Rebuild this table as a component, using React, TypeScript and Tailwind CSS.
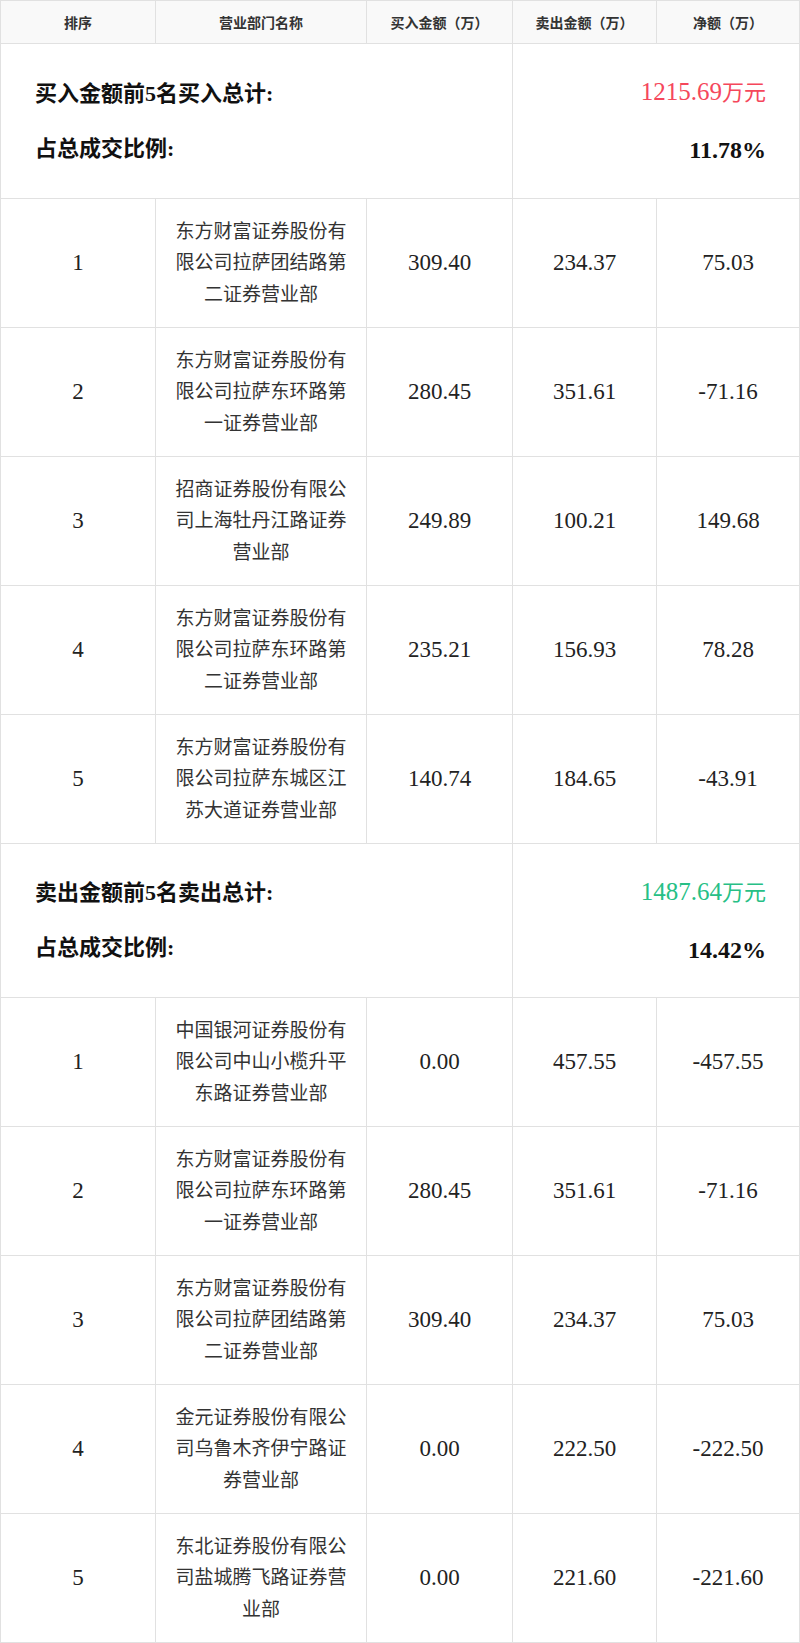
import React from "react";

type Row = { rank: string; name: string; buy: string; sell: string; net: string };

const buyRows: Row[] = [
  { rank: "1", name: "东方财富证券股份有限公司拉萨团结路第二证券营业部", buy: "309.40", sell: "234.37", net: "75.03" },
  { rank: "2", name: "东方财富证券股份有限公司拉萨东环路第一证券营业部", buy: "280.45", sell: "351.61", net: "-71.16" },
  { rank: "3", name: "招商证券股份有限公司上海牡丹江路证券营业部", buy: "249.89", sell: "100.21", net: "149.68" },
  { rank: "4", name: "东方财富证券股份有限公司拉萨东环路第二证券营业部", buy: "235.21", sell: "156.93", net: "78.28" },
  { rank: "5", name: "东方财富证券股份有限公司拉萨东城区江苏大道证券营业部", buy: "140.74", sell: "184.65", net: "-43.91" },
];

const sellRows: Row[] = [
  { rank: "1", name: "中国银河证券股份有限公司中山小榄升平东路证券营业部", buy: "0.00", sell: "457.55", net: "-457.55" },
  { rank: "2", name: "东方财富证券股份有限公司拉萨东环路第一证券营业部", buy: "280.45", sell: "351.61", net: "-71.16" },
  { rank: "3", name: "东方财富证券股份有限公司拉萨团结路第二证券营业部", buy: "309.40", sell: "234.37", net: "75.03" },
  { rank: "4", name: "金元证券股份有限公司乌鲁木齐伊宁路证券营业部", buy: "0.00", sell: "222.50", net: "-222.50" },
  { rank: "5", name: "东北证券股份有限公司盐城腾飞路证券营业部", buy: "0.00", sell: "221.60", net: "-221.60" },
];

const FONT = { fontFamily: '"Liberation Serif", "Noto Sans CJK SC", serif' };

const cols = "grid grid-cols-[155px_211px_146px_144px_143px]";
const cell = "border-r border-b border-[#e1e1e1] flex items-center justify-center";

function Header() {
  const heads = ["排序", "营业部门名称", "买入金额（万）", "卖出金额（万）", "净额（万）"];
  return (
    <div className={cols}>
      {heads.map((h) => (
        <div
          key={h}
          className={`${cell} h-[43px] bg-[#f9f9f9] text-[14px] font-bold text-[#333]`}
          style={{ fontFamily: '"Noto Sans CJK SC", sans-serif' }}
        >
          {h}
        </div>
      ))}
    </div>
  );
}

function DataRow({ r }: { r: Row }) {
  const num = `${cell} h-[129px] text-[23px] text-[#222]`;
  return (
    <div className={cols}>
      <div className={num}>{r.rank}</div>
      <div className={`${cell} h-[129px] px-[16px]`}>
        <div className="text-center text-[19px] leading-[31.5px] text-[#333]">{r.name}</div>
      </div>
      <div className={num}>{r.buy}</div>
      <div className={num}>{r.sell}</div>
      <div className={num}>{r.net}</div>
    </div>
  );
}

function Summary({
  label,
  total,
  ratio,
  color,
  h,
}: {
  label: string;
  total: string;
  ratio: string;
  color: string;
  h: string;
}) {
  return (
    <div className={cols}>
      <div className={`col-span-3 border-r border-b border-[#e1e1e1] ${h} pl-[34px] flex flex-col justify-center gap-[25px]`}>
        <div className="text-[22px] leading-[30px] font-bold text-[#111]">{label}</div>
        <div className="text-[22px] leading-[30px] font-bold text-[#111]">占总成交比例:</div>
      </div>
      <div className={`col-span-2 border-r border-b border-[#e1e1e1] ${h} pr-[33px] flex flex-col justify-center items-end gap-[25px]`}>
        <div className="leading-[30px]" style={{ color }}>
          <span className="text-[25px]">{total}</span>
          <span className="text-[22px]">万元</span>
        </div>
        <div className="text-[24px] leading-[30px] font-bold text-[#111]">{ratio}</div>
      </div>
    </div>
  );
}

export default function App() {
  return (
    <div className="w-[800px] bg-white" style={FONT}>
      <div className="border-t border-l border-[#e1e1e1]">
        <Header />
        <Summary label="买入金额前5名买入总计:" total="1215.69" ratio="11.78%" color="#f5475b" h="h-[155px]" />
        {buyRows.map((r) => (
          <DataRow key={"b" + r.rank} r={r} />
        ))}
        <Summary label="卖出金额前5名卖出总计:" total="1487.64" ratio="14.42%" color="#27bf86" h="h-[154px]" />
        {sellRows.map((r) => (
          <DataRow key={"s" + r.rank} r={r} />
        ))}
      </div>
    </div>
  );
}
